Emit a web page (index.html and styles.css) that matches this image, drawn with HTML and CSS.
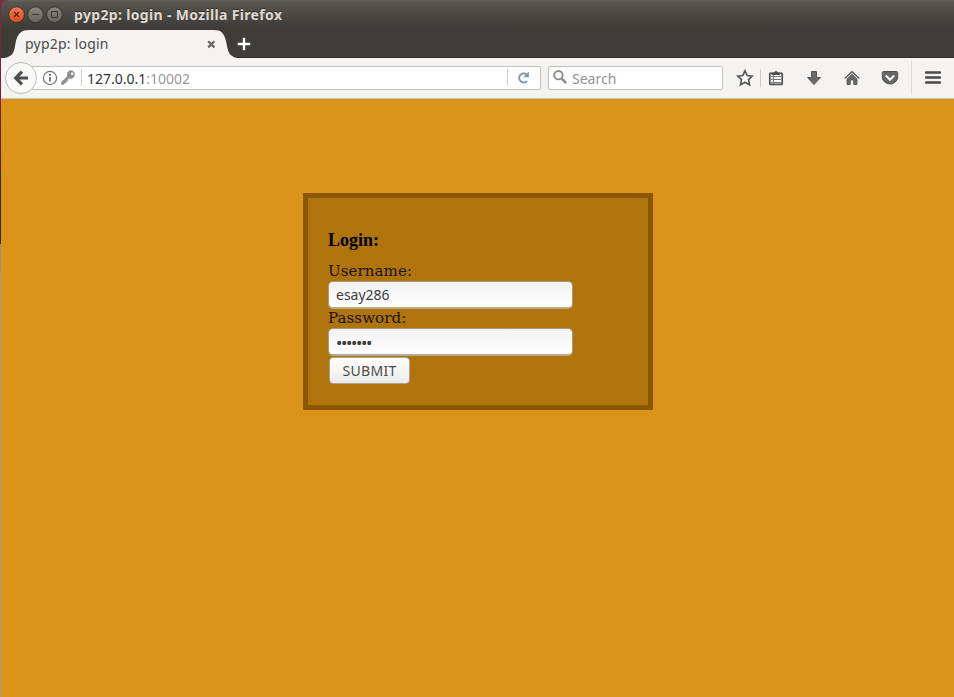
FILE: index.html
```html
<!DOCTYPE html>
<html lang="en">
<head>
<meta charset="utf-8">
<title>pyp2p: login</title>
<link rel="stylesheet" href="styles.css">
</head>
<body>
<div class="desktop">
<div class="window">
  <header class="titlebar">
    <svg class="controls" width="58" height="18" viewBox="0 0 58 18" fill="none">
      <defs>
        <linearGradient id="close" x1="0" y1="0" x2="0" y2="1"><stop stop-color="#f37a52"/><stop offset="1" stop-color="#de4c1c"/></linearGradient>
        <linearGradient id="plain" x1="0" y1="0" x2="0" y2="1"><stop stop-color="#89867c"/><stop offset="1" stop-color="#65635b"/></linearGradient>
      </defs>
      <g stroke="#33322d"><circle cx="9.5" cy="8.7" r="7.9" fill="url(#close)"/><circle cx="28.5" cy="8.7" r="7.9" fill="url(#plain)"/><circle cx="47.5" cy="8.7" r="7.9" fill="url(#plain)"/></g>
      <path d="M7 6l5 5M12 6l-5 5" stroke="#4a2a1c" stroke-width="1.3"/>
      <path d="M25 8.5h7M44.5 5.5h6v6h-6z" stroke="#393832"/>
    </svg>
    <span class="title">pyp2p: login - Mozilla Firefox</span>
  </header>
  <nav class="tabs">
    <div class="tab">
      <svg class="tab-shape" width="240" height="28" viewBox="0 0 240 28"><path d="M0 28C14 28 13 20 15 11C17 3 21 0 28 0H213C220 0 223 3 225 11C227 20 227 28 239 28Z" fill="#f4f3f1"/></svg>
      <span class="tab-label">pyp2p: login</span>
      <svg class="tab-close" width="9" height="9" viewBox="0 0 9 9"><path d="M1.2 1.2l6.2 6.2M7.4 1.2L1.2 7.4" stroke="#666" stroke-width="2.2"/></svg>
    </div>
    <svg class="new-tab" width="14" height="14" viewBox="0 0 14 14"><path d="M7 .8v12.4M.8 7h12.4" stroke="#fff" stroke-width="2.4"/></svg>
  </nav>
  <div class="toolbar">
    <div class="back"><svg width="16" height="16" viewBox="0 0 16 16" fill="none" stroke="#4d4d4d" stroke-width="3.2"><path d="M9 1.7L2.7 8 9 14.3M3 8h12"/></svg></div>
    <div class="address">
      <svg class="info" width="16" height="16" viewBox="0 0 16 16"><circle cx="8" cy="8" r="6.6" fill="none" stroke="#757575" stroke-width="1.2"/><path d="M8 7v4.6M8 4v1.8" stroke="#666" stroke-width="1.7"/></svg>
      <svg class="key" width="15" height="15" viewBox="0 0 15 15"><path fill-rule="evenodd" d="M10 .3a4.3 4.3 0 0 1 1 8.3c-1 .3-2 .2-2.7-.1L6.7 10v1.7H5v1.8H3.3L2.5 14.7H.2v-2.5l6-6A4.3 4.3 0 0 1 10 .3zM11.1 2.4a1.3 1.3 0 1 0 .1 2.6 1.3 1.3 0 0 0-.1-2.6z" fill="#8f8f8f"/></svg>
      <i class="divider"></i>
      <span class="url">127.0.0.1<span class="port">:10002</span></span>
      <i class="divider reload-divider"></i>
      <svg class="reload" width="13" height="13" viewBox="0 0 13 13"><path d="M9.3 3.2A4.5 4.5 0 1 0 10 10" fill="none" stroke="#8795a1" stroke-width="2"/><path d="M11.9.6v5.6H6.3z" fill="#8795a1"/></svg>
    </div>
    <div class="search">
      <svg width="15" height="15" viewBox="0 0 15 15" fill="none" stroke="#8d8d8d"><circle cx="5.4" cy="5.2" r="4.2" stroke-width="1.9"/><path d="M8.5 8.4l4.6 4.6" stroke-width="2.5"/></svg>
      <span>Search</span>
    </div>
    <div class="tools">
      <svg class="star" width="18" height="18" viewBox="0 0 18 18"><path d="M9 1.8l2.1 4.7 5.1.6-3.7 3.5 1 5.2L9 13.2l-4.5 2.6 1-5.2L1.8 7.1l5.1-.6z" fill="#fff" stroke="#555" stroke-width="1.7"/></svg>
      <i class="divider"></i>
      <svg class="list" width="16" height="16" viewBox="0 0 16 16"><path d="M2.3 3.3h11.4q.5 0 .5.5v10q0 .5-.5.5H2.3q-.5 0-.5-.5v-10q0-.5.5-.5z" fill="#fff" stroke="#505050" stroke-width="1.7"/><path d="M4 5V2.5h2.2L8 .4l1.8 2.1H12V5z" fill="#505050"/><path d="M3 6.5h1.6M6 6.5h7M3 9.5h1.6M6 9.5h7M3 12.5h1.6M6 12.5h7" stroke="#777" stroke-width="1"/><path d="M5.3 5v9" stroke="#606060"/></svg>
      <svg class="download" width="16" height="16" viewBox="0 0 16 16"><path d="M5.5 1.5h5v6h4L8 14.5 1.5 7.5h4z" fill="#6a6a6a" stroke="#505050"/></svg>
      <svg class="home" width="16" height="16" viewBox="0 0 16 16"><path d="M8 4.2l5 4.8v5.5H9.7V10H6.3v4.5H3V9z" fill="#686868" stroke="#555" stroke-width=".8"/><path d="M.8 8.5L8 1.7l7.2 6.8" fill="none" stroke="#555" stroke-width="1.3"/></svg>
      <svg class="pocket" width="18" height="16" viewBox="0 0 18 16"><path d="M2.5 1.5h13q1.2 0 1.2 1.2v4.1a7.7 7.2 0 0 1-15.4 0V2.7q0-1.2 1.2-1.2z" fill="#666" stroke="#505050"/><path d="M4.8 5.5L9 9.7l4.2-4.2" fill="none" stroke="#f4f3f1" stroke-width="2.2"/></svg>
      <i class="menu-divider"></i>
      <svg class="menu" width="18" height="16" viewBox="0 0 18 16"><path d="M2.2 2.5h13.6M2.2 7.5h13.6M2.2 12.5h13.6" stroke="#4b4b4b" stroke-width="2.7" stroke-linecap="round"/></svg>
    </div>
  </div>
  <main class="page">
    <form class="login">
      <h3>Login:</h3>
      <label for="user">Username:</label>
      <input id="user" type="text" value="esay286">
      <label for="pass">Password:</label>
      <input id="pass" class="password" type="text" value="•••••••">
      <button type="button">SUBMIT</button>
    </form>
  </main>
</div>
</div>
</body>
</html>
```
FILE: styles.css
```css
* { box-sizing: border-box; }
body { margin: 0; overflow: hidden; }
svg { display: block; flex: none; }
.desktop {
  height: 697px;
  padding-left: 1px;
  background: linear-gradient(#8b2540 0, #5d1b31 172px, #292b2e 173px 244px, #929292 244px 270px, #777 270px 271px, #9b9b9b 271px);
}
.window {
  height: 697px;
  display: flex;
  flex-direction: column;
  border-radius: 7px 0 0 0;
  overflow: hidden;
  background: #3c3b37;
  font-family: "Noto Sans", "Open Sans", sans-serif;
}
.titlebar {
  height: 30px;
  display: flex;
  align-items: center;
  padding-left: 6px;
  background: linear-gradient(#656259 0, #58564e 2px, #3e3d39 27px);
}
.title {
  margin-left: 9px;
  color: #dfdbd2;
  font-size: 14px;
  font-weight: 700;
  letter-spacing: .34px;
  line-height: 20px;
  white-space: pre;
  text-shadow: 0 -1px #302f2b;
}
.tabs { height: 28px; display: flex; background: linear-gradient(#3d3c38 26px, #302f2c 28px); }
.tab { width: 236px; height: 28px; position: relative; display: flex; align-items: center; padding-left: 24px; }
.tab-shape { position: absolute; left: 0; top: 0; }
.tab-label { position: relative; width: 182px; font-size: 14px; letter-spacing: .22px; color: #4b4b4b; line-height: 20px; white-space: nowrap; }
.tab-close { position: relative; }
.new-tab { margin-top: 7px; }
.toolbar {
  height: 41px;
  display: flex;
  align-items: center;
  padding: 0 0 1px 4px;
  background: #f4f3f1;
  border-bottom: 1px solid #c7c5c0;
}
.back {
  width: 32px; height: 32px;
  border: 1px solid #bdbbb7;
  border-radius: 50%;
  background: #f9f9f8;
  display: flex; align-items: center; justify-content: center;
  position: relative;
  z-index: 1;
}
.address, .search {
  height: 24px;
  border: 1px solid #c3c1bc;
  border-radius: 2px;
  background: #fff;
  display: flex;
  align-items: center;
}
.address { width: 510px; margin-left: -6px; padding-left: 10px; }
.key { margin-left: 3px; }
.divider { width: 1px; height: 18px; background: #cdcdcb; flex: none; }
.address .divider { height: 17px; margin-left: 5px; }
.url { margin-left: 5px; width: 420px; padding-top: 2px; font-size: 14px; line-height: 20px; color: #333; }
.port { color: #999; }
.address .reload-divider { margin-left: 0; }
.reload { margin-left: 9px; }
.search { width: 175px; margin-left: 7px; padding-left: 4px; }
.search span { margin-left: 4px; padding-top: 2px; font-size: 14px; line-height: 20px; color: #939393; }
.tools { display: flex; align-items: center; }
.star { margin-left: 13px; }
.tools .divider { margin-left: 6px; }
.list { margin-left: 7px; }
.download, .home { margin-left: 22px; }
.pocket { margin-left: 21px; }
.menu-divider { width: 1px; height: 34px; margin-left: 12px; background: #dcdbd8; }
.menu { margin-left: 12px; }
.page { flex: 1; padding: 94px 0 0 302px; background: #db9418; }
.login {
  width: 350px; height: 217px;
  border: 5px solid #8b5700;
  background: #af740c;
  padding: 32px 20px 0;
  display: flex;
  flex-direction: column;
  align-items: flex-start;
}
h3 { margin: 0 0 12px; font: 700 18px/20px "Liberation Serif", serif; color: #000; }
label { font: 15px/19px "DejaVu Serif", serif; color: #17130b; height: 19px; letter-spacing: .1px; }
input {
  width: 245px; height: 28px;
  padding: 0 7px 1px;
  border: 1px solid #a49a89;
  border-bottom: 2px solid #b9a98e;
  border-radius: 5px;
  outline: 0;
  background: linear-gradient(#f2f2f2, #fff);
  font: 14px "Noto Sans", sans-serif;
  color: #3c3c3c;
}
.password { padding: 2px 7px 0; margin-bottom: 1px; font: 17px "Noto Sans", sans-serif; letter-spacing: -1.4px; }
button {
  width: 81px; height: 27px;
  margin-left: 1px;
  padding: 0;
  border: 1px solid #aaa294;
  border-radius: 4px;
  background: linear-gradient(#fefefe, #ebebe9);
  font: 14px "Noto Sans", sans-serif;
  letter-spacing: .3px;
  color: #4c4c4c;
}
```
